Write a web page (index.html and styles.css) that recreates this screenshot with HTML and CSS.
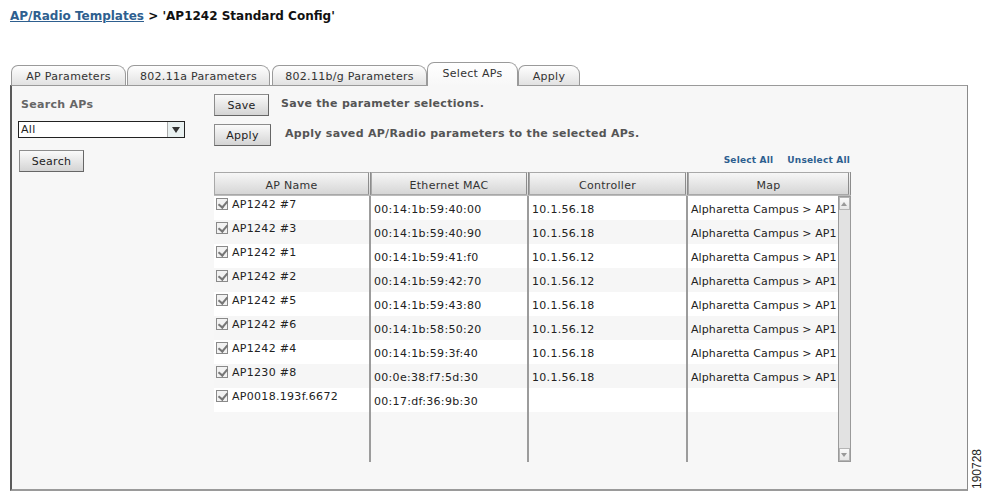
FILE: index.html
```html
<!DOCTYPE html>
<html lang="en">

<head>
    <meta charset="UTF-8">
    <title>AP/Radio Templates</title>
    <link rel="stylesheet" href="styles.css">
</head>

<body>
    <div class="crumb"><a href="#">AP/Radio Templates</a> &gt; 'AP1242 Standard Config'</div>

    <div class="tabs">
        <span class="tab t1">AP Parameters</span>
        <span class="tab t2">802.11a Parameters</span>
        <span class="tab t3">802.11b/g Parameters</span>
        <span class="tab t4 active">Select APs</span>
        <span class="tab t5">Apply</span>
    </div>

    <div class="panel">
        <div class="side">
            <div class="side-title">Search APs</div>
            <div class="select">
                <span>All</span>
                <span class="select-arrow"></span>
            </div>
            <button class="btn btn-search">Search</button>
        </div>

        <div class="main">
            <div class="action">
                <button class="btn btn-save">Save</button>
                <span class="action-text">Save the parameter selections.</span>
            </div>
            <div class="action action-apply">
                <button class="btn btn-apply">Apply</button>
                <span class="action-text">Apply saved AP/Radio parameters to the selected APs.</span>
            </div>
            <div class="links">
                <a href="#">Select All</a>
                <a href="#">Unselect All</a>
            </div>

            <div class="grid">
                <div class="thead">
                    <div class="th c1">AP Name</div>
                    <div class="th c2">Ethernet MAC</div>
                    <div class="th c3">Controller</div>
                    <div class="th c4">Map</div>
                </div>
                <div class="tbody">
                    <div class="col c1">
                        <div class="cell"><span class="check"></span>AP1242 #7</div>
                        <div class="cell"><span class="check"></span>AP1242 #3</div>
                        <div class="cell"><span class="check"></span>AP1242 #1</div>
                        <div class="cell"><span class="check"></span>AP1242 #2</div>
                        <div class="cell"><span class="check"></span>AP1242 #5</div>
                        <div class="cell"><span class="check"></span>AP1242 #6</div>
                        <div class="cell"><span class="check"></span>AP1242 #4</div>
                        <div class="cell"><span class="check"></span>AP1230 #8</div>
                        <div class="cell"><span class="check"></span>AP0018.193f.6672</div>
                    </div>
                    <div class="col c2">
                        <div class="cell">00:14:1b:59:40:00</div>
                        <div class="cell">00:14:1b:59:40:90</div>
                        <div class="cell">00:14:1b:59:41:f0</div>
                        <div class="cell">00:14:1b:59:42:70</div>
                        <div class="cell">00:14:1b:59:43:80</div>
                        <div class="cell">00:14:1b:58:50:20</div>
                        <div class="cell">00:14:1b:59:3f:40</div>
                        <div class="cell">00:0e:38:f7:5d:30</div>
                        <div class="cell">00:17:df:36:9b:30</div>
                    </div>
                    <div class="col c3">
                        <div class="cell">10.1.56.18</div>
                        <div class="cell">10.1.56.18</div>
                        <div class="cell">10.1.56.12</div>
                        <div class="cell">10.1.56.12</div>
                        <div class="cell">10.1.56.18</div>
                        <div class="cell">10.1.56.12</div>
                        <div class="cell">10.1.56.18</div>
                        <div class="cell">10.1.56.18</div>
                        <div class="cell"></div>
                    </div>
                    <div class="col c4">
                        <div class="cell">Alpharetta Campus &gt; AP1</div>
                        <div class="cell">Alpharetta Campus &gt; AP1</div>
                        <div class="cell">Alpharetta Campus &gt; AP1</div>
                        <div class="cell">Alpharetta Campus &gt; AP1</div>
                        <div class="cell">Alpharetta Campus &gt; AP1</div>
                        <div class="cell">Alpharetta Campus &gt; AP1</div>
                        <div class="cell">Alpharetta Campus &gt; AP1</div>
                        <div class="cell">Alpharetta Campus &gt; AP1</div>
                        <div class="cell"></div>
                    </div>
                    <div class="scrollbar">
                        <span class="sb-btn sb-up"></span>
                        <span class="sb-btn sb-down"></span>
                    </div>
                </div>
            </div>
        </div>
    </div>

    <div class="fig-id">190728</div>
</body>

</html>
```

FILE: styles.css
```css
* {
    padding: 0;
    margin: 0;
    box-sizing: border-box;
}

body {
    width: 985px;
    height: 501px;
    padding: 0 10px;
    font-family: "DejaVu Sans", Verdana, sans-serif;
    font-size: 11px;
    letter-spacing: 0.3px;
    color: #222;
    background-color: #fff;
    position: relative;
    overflow: hidden;
}

/* breadcrumb */
.crumb {
    margin-top: 8px;
    height: 16px;
    line-height: 16px;
    font-size: 12px;
    font-weight: bold;
    letter-spacing: 0;
    color: #111;
}

.crumb a {
    color: #2e5f8f;
    text-decoration: underline;
}

/* tabs */
.tabs {
    margin-top: 38px;
    height: 23px;
    display: flex;
    align-items: flex-end;
    padding-left: 1px;
    position: relative;
    z-index: 1;
}

.tab {
    height: 20px;
    line-height: 21px;
    text-align: center;
    color: #333;
    border: 1px solid #9a9a9a;
    border-bottom: none;
    border-radius: 7px 9px 0 0;
    background: linear-gradient(#fefefe, #e2e2e2);
    margin-right: 1px;
}

.t1 { width: 115px; }
.t2 { width: 143px; }
.t3 { width: 155px; margin-left: 1px; margin-right: 0; }
.t4 { width: 91px; margin-right: 0; }
.t5 { width: 62px; }

.tab.active {
    height: 24px;
    line-height: 21px;
    margin-bottom: -1px;
    background: linear-gradient(#fff, #f7f7f7);
}

/* panel */
.panel {
    width: 958px;
    height: 406px;
    display: flex;
    padding: 8px 0 0 6px;
    background-color: #f7f7f7;
    border-top: 1px solid #9a9a9a;
    border-left: 2px solid #5a5a5a;
    border-right: 1px solid #8a8a8a;
    border-bottom: 2px solid #9a9a9a;
}

.side {
    width: 196px;
}

.side-title {
    margin-top: 4px;
    padding-left: 3px;
    line-height: 14px;
    font-weight: bold;
    color: #666;
}

.select {
    margin-top: 9px;
    width: 167px;
    height: 17px;
    display: flex;
    justify-content: space-between;
    background-color: #fff;
    border: 1px solid #222;
    line-height: 15px;
    padding-left: 2px;
}

.select-arrow {
    width: 17px;
    height: 15px;
    background-color: #e9f1f1;
    border-left: 1px solid #aaa;
    position: relative;
}

.select-arrow::after {
    content: "";
    position: absolute;
    left: 4px;
    top: 5px;
    border-left: 4px solid transparent;
    border-right: 4px solid transparent;
    border-top: 6px solid #333;
}

.btn {
    height: 22px;
    font-family: inherit;
    font-size: 11px;
    letter-spacing: 0.3px;
    color: #222;
    border: 1px solid #8c8c8c;
    border-right-color: #666;
    border-bottom-color: #666;
    background: linear-gradient(#fafafa, #d4d4d4);
}

.btn-search {
    margin: 12px 0 0 1px;
    width: 65px;
}

.main {
    width: 637px;
}

.action {
    height: 22px;
    display: flex;
    align-items: center;
}

.action-apply {
    margin-top: 8px;
}

.btn-save {
    width: 55px;
    margin-right: 12px;
}

.btn-apply {
    width: 57px;
    margin-right: 14px;
}

.action-text {
    font-weight: bold;
    color: #555;
    margin-top: -4px;
}

.links {
    margin-top: 8px;
    height: 12px;
    line-height: 12px;
    display: flex;
    justify-content: flex-end;
    gap: 14px;
    padding-right: 1px;
    font-size: 9px;
    letter-spacing: 0.2px;
    font-weight: bold;
}

.links a {
    color: #2e5f8f;
    text-decoration: none;
}

/* grid */
.grid {
    margin-top: 6px;
}

.thead {
    display: flex;
    height: 24px;
    border-bottom: 1px solid #bbb;
}

.th {
    height: 23px;
    line-height: 25px;
    text-align: center;
    color: #333;
    border: 1px solid #a8a8a8;
    border-right: 3px double #8c8c8c;
    background: linear-gradient(#f6f6f6, #d6d6d6);
}

.th.c1 { width: 157px; }
.th.c2 { width: 158px; }
.th.c3 { width: 159px; }
.th.c4 { width: 163px; }

.tbody {
    display: flex;
    height: 266px;
}

.col {
    height: 100%;
    border-right: 2px solid #9c9c9c;
}

.col.c1 { width: 157px; }
.col.c2 { width: 158px; }
.col.c3 { width: 159px; }
.col.c4 { width: 150px; border-right: none; }

.cell {
    height: 24px;
    line-height: 14px;
    padding: 7px 0 0 3px;
    white-space: nowrap;
    background-color: #fff;
    color: #222;
}

.c4 .cell {
    letter-spacing: 0.1px;
}

.cell:nth-child(even) {
    background-color: #f6f6f6;
}

.c1 .cell {
    display: flex;
    padding: 2px 0 0 2px;
}

.check {
    width: 12px;
    height: 12px;
    margin: 0 4px 0 0;
    border: 1px solid #8a8a8a;
    background-color: #f2f2f2;
    position: relative;
}

.check::after {
    content: "";
    position: absolute;
    left: 3px;
    top: 0px;
    width: 4px;
    height: 7px;
    border-right: 2px solid #777;
    border-bottom: 2px solid #777;
    transform: rotate(40deg);
}

.scrollbar {
    width: 13px;
    height: 100%;
    display: flex;
    flex-direction: column;
    justify-content: space-between;
    background-color: #e2e2e2;
    border: 1px solid #9a9a9a;
}

.sb-btn {
    width: 11px;
    height: 13px;
    background: linear-gradient(#fafafa, #e6e6e6);
    border: 1px solid #b5b5b5;
    position: relative;
}

.sb-btn::after {
    content: "";
    position: absolute;
    left: 1px;
    top: 4px;
    border-left: 3px solid transparent;
    border-right: 3px solid transparent;
}

.sb-up::after {
    border-bottom: 4px solid #999;
}

.sb-down::after {
    border-top: 4px solid #999;
}

/* figure number at the page edge */
.fig-id {
    position: absolute;
    left: 970px;
    top: 449px;
    writing-mode: vertical-rl;
    transform: rotate(180deg);
    font-family: "Liberation Sans", Arial, sans-serif;
    font-size: 12px;
    line-height: 14px;
    letter-spacing: 0;
    color: #222;
}
```
